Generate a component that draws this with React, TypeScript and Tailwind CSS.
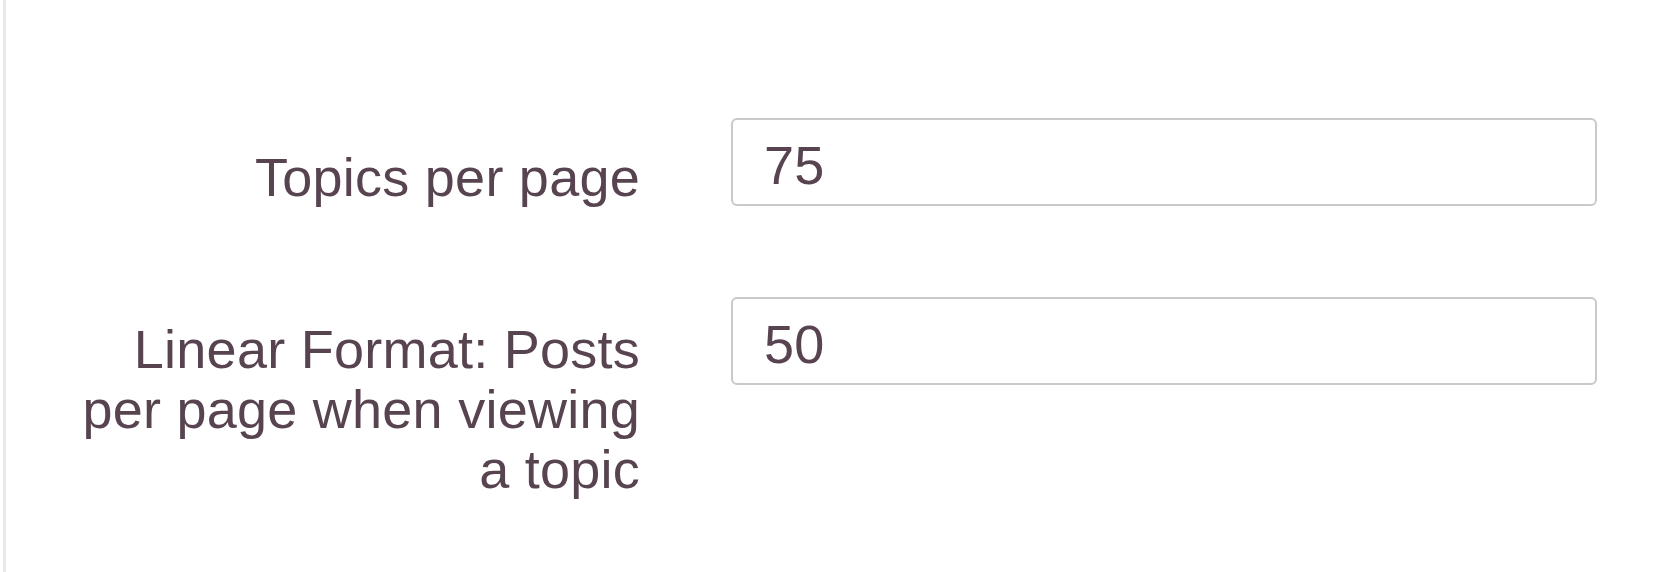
const labelClass =
  "w-[570px] shrink-0 text-right font-['Liberation_Sans',Arial,sans-serif] text-[54px] leading-[60px] tracking-[0.25px] text-[#584450]"

const inputClass =
  "ml-[91px] h-[88px] w-[866px] shrink-0 rounded-[6px] border-2 border-[#c9c9c9] bg-white pl-[31px] pt-[6px] font-['Liberation_Sans',Arial,sans-serif] text-[54px] tracking-[0.25px] text-[#584450] outline-none"

export default function App() {
  return (
    <div className="ml-[3px] min-h-[572px] border-l-[3px] border-[#e9e9e9] bg-white">
      <div className="flex flex-col pl-[64px] pt-[118px]">
        <div className="flex">
          <label htmlFor="topics-per-page" className={`${labelClass} pt-[29px]`}>
            Topics per page
          </label>
          <input id="topics-per-page" type="text" defaultValue="75" className={inputClass} />
        </div>
        <div className="mt-[90px] flex">
          <label htmlFor="posts-per-page" className={`${labelClass} pt-[22px]`}>
            Linear Format: Posts per page when viewing a topic
          </label>
          <input id="posts-per-page" type="text" defaultValue="50" className={inputClass} />
        </div>
      </div>
    </div>
  )
}
